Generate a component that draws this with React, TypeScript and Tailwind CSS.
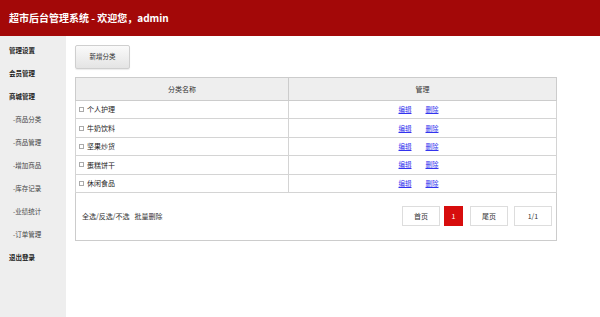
const font = { fontFamily: '"Noto Sans CJK SC", "Liberation Sans", sans-serif' };

const menu = [
  { label: "管理设置", top: true },
  { label: "会员管理", top: true },
  { label: "商城管理", top: true },
  { label: "-商品分类", top: false },
  { label: "-商品管理", top: false },
  { label: "-增加商品", top: false },
  { label: "-库存记录", top: false },
  { label: "-业绩统计", top: false },
  { label: "-订单管理", top: false },
  { label: "退出登录", top: true },
];

const categories = ["个人护理", "牛奶饮料", "坚果炒货", "蛋糕饼干", "休闲食品"];

const App = () => {
  return (
    <div className="flex flex-col h-[317px] w-[600px] overflow-hidden bg-white text-[#333]" style={font}>
      <div className="h-[36px] shrink-0 bg-[#a30808] flex items-center px-[9px]">
        <h1 className="text-white font-bold text-[10px] leading-none">超市后台管理系统 - 欢迎您，admin</h1>
      </div>

      <div className="flex flex-1">
        {/* sidebar */}
        <div className="w-[66px] shrink-0 bg-[#eeeeee] pt-[3px]">
          {menu.map((item) => (
            <div
              key={item.label}
              className={`h-[23px] flex items-center text-[6.5px] leading-none ${
                item.top ? "pl-[9px] font-bold text-[#222]" : "pl-[13px] text-[#444]"
              }`}
            >
              {item.label}
            </div>
          ))}
        </div>

        {/* content */}
        <div className="flex-1 pl-[9px] pt-[9px] flex flex-col items-start">
          <button className="block w-[55px] h-[24px] border border-[#cfcfcf] rounded-[2px] bg-gradient-to-b from-[#fafafa] to-[#e4e4e4] text-[6.5px] text-[#333] shadow-[0_1px_1px_rgba(0,0,0,0.08)]">
            新增分类
          </button>

          <table className="mt-[8px] w-[482px] border-collapse border border-[#cccccc] text-[7px]">
            <thead>
              <tr className="h-[23px] bg-[#eeeeee]">
                <th className="w-[213px] border border-[#cccccc] font-normal text-[#333]">分类名称</th>
                <th className="border border-[#cccccc] font-normal text-[#333]">管理</th>
              </tr>
            </thead>
            <tbody>
              {categories.map((name) => (
                <tr key={name} className="h-[18.4px]">
                  <td className="border border-[#d4d4d4] pl-[3px]">
                    <div className="flex items-center gap-[3px]">
                      <span className="inline-block w-[5px] h-[5px] border border-[#aaa] bg-white" />
                      <span className="text-[#222]">{name}</span>
                    </div>
                  </td>
                  <td className="border border-[#d4d4d4] text-center pr-[8px]">
                    <a className="text-[#3333ee] underline text-[6.5px]">编辑</a>
                    <a className="ml-[14px] text-[#3333ee] underline text-[6.5px]">删除</a>
                  </td>
                </tr>
              ))}
              <tr className="h-[48px]">
                <td colSpan={2} className="border border-[#cccccc] pl-[6px] pr-[4px]">
                  <div className="flex items-center justify-between">
                    <div className="flex items-center gap-[5px] text-[7px] text-[#333]">
                      <span>全选/反选/不选</span>
                      <span>批量删除</span>
                    </div>
                    <div className="flex items-center text-[7px]">
                      <span className="w-[38px] h-[20px] flex items-center justify-center border border-[#dddddd]">首页</span>
                      <span className="ml-[4px] w-[19px] h-[20px] flex items-center justify-center bg-[#d70d0d] text-white">1</span>
                      <span className="ml-[7px] w-[38px] h-[20px] flex items-center justify-center border border-[#dddddd]">尾页</span>
                      <span className="ml-[6px] w-[38px] h-[20px] flex items-center justify-center border border-[#dddddd]">1/1</span>
                    </div>
                  </div>
                </td>
              </tr>
            </tbody>
          </table>
        </div>
      </div>
    </div>
  );
};

export default App;
